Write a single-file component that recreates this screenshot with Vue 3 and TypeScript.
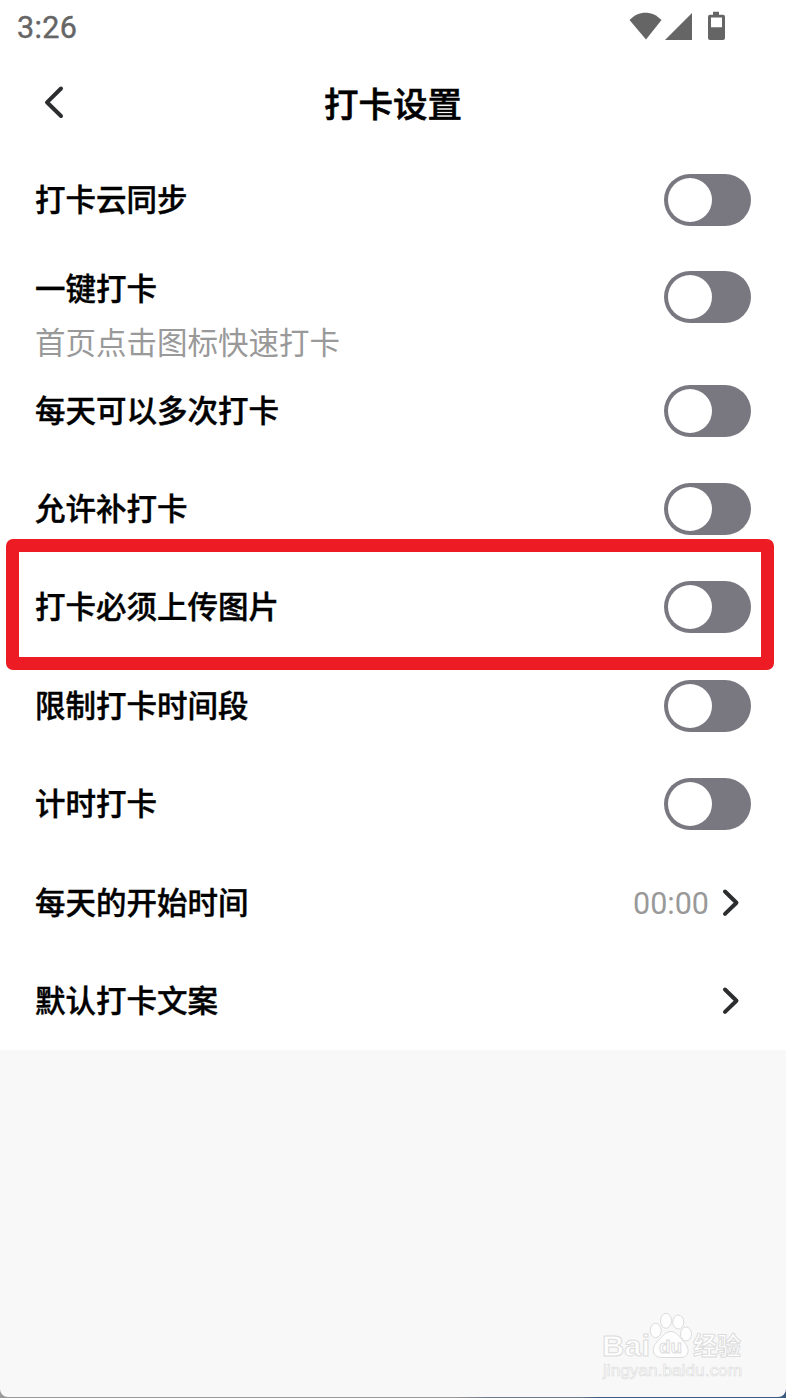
<script setup lang="ts">
interface Row {
  label: string
  kind: 'switch' | 'link'
  hint?: string
  value?: string
  marked?: boolean
}

const rows: Row[] = [
  { label: '打卡云同步', kind: 'switch' },
  { label: '一键打卡', kind: 'switch', hint: '首页点击图标快速打卡' },
  { label: '每天可以多次打卡', kind: 'switch' },
  { label: '允许补打卡', kind: 'switch' },
  { label: '打卡必须上传图片', kind: 'switch', marked: true },
  { label: '限制打卡时间段', kind: 'switch' },
  { label: '计时打卡', kind: 'switch' },
  { label: '每天的开始时间', kind: 'link', value: '00:00' },
  { label: '默认打卡文案', kind: 'link' },
]
</script>

<template>
  <div class="backdrop">
    <div class="screen">
      <div class="status">
        <span class="clock">3:26</span>
        <svg class="indicators" width="98" height="30" viewBox="0 0 98 30" fill="#656565">
          <path d="M.5 8C9.500-1.800 23.500-1.800 32.500 8L17 27.500Z" />
          <path d="M36 28H63V1Z" />
          <path d="M84 -.3h6v3h4q2 0 2 2V26q0 2-2 2H81q-2 0-2-2V4.700q0-2 2-2h3ZM82 5.500V15.200h11V5.500Z" fill-rule="evenodd" />
        </svg>
      </div>
      <header class="bar">
        <svg class="back" width="24" height="36" viewBox="0 0 24 36">
          <path d="M19 4.500 5 18.300 19 32" />
        </svg>
        <h1 class="title">打卡设置</h1>
      </header>
      <main class="list">
        <div v-for="row in rows" :key="row.label" class="row" :class="{ tall: row.hint }">
          <div class="texts">
            <span class="label">{{ row.label }}</span>
            <span v-if="row.hint" class="hint">{{ row.hint }}</span>
          </div>
          <span v-if="row.kind === 'switch'" class="switch"><span class="knob"></span></span>
          <span v-else class="link">
            <span v-if="row.value" class="value">{{ row.value }}</span>
            <svg width="24" height="32" viewBox="0 0 24 32"><path d="M6 4.500 17.500 15.700 6 26.900" /></svg>
          </span>
          <span v-if="row.marked" class="mark"></span>
        </div>
      </main>
      <svg class="watermark" width="146" height="74" viewBox="0 0 146 74">
        <g class="ink">
          <text x="2" y="46" class="brand" textLength="48" lengthAdjust="spacingAndGlyphs">Bai</text>
          <ellipse cx="55.700" cy="20.500" rx="5.500" ry="7.200" />
          <ellipse cx="66" cy="10.800" rx="5.500" ry="7.500" />
          <ellipse cx="78.300" cy="12" rx="5.500" ry="7" />
          <ellipse cx="86" cy="24" rx="5.500" ry="7" />
          <path d="M71 21.500C77 21.500 79 27 84 32C90 38 90 47.500 80 47.500H62C52 47.500 51 38 57 32C62 27 65 21.500 71 21.500Z" />
          <text x="59" y="43" class="du" textLength="23" lengthAdjust="spacingAndGlyphs">du</text>
          <text x="93" y="45" class="cjk" textLength="48" lengthAdjust="spacingAndGlyphs">经验</text>
          <text x="3" y="65.500" class="site" textLength="139" lengthAdjust="spacingAndGlyphs">jingyan.baidu.com</text>
        </g>
      </svg>
    </div>
  </div>
</template>

<style>
body {
  margin: 0;
}
</style>

<style scoped>
.backdrop {
  width: 786px;
  height: 1398px;
  overflow: hidden;
  background: linear-gradient(90deg, #999 0 58%, #6c7a8c 62% 74%, #3d5a83 76%);
}
.screen {
  position: relative;
  height: 1397px;
  overflow: hidden;
  background: #f8f8f8;
  border-radius: 0 0 8px 8px;
  font-family: Roboto, "Noto Sans CJK SC", sans-serif;
}
.status {
  display: flex;
  justify-content: space-between;
  box-sizing: border-box;
  height: 56px;
  padding: 12px 59px 0 17px;
  background: #fff;
}
.clock {
  font-size: 30.5px;
  line-height: 32px;
  font-weight: 400;
  color: #656565;
  letter-spacing: 0.4px;
  -webkit-text-stroke: 0.4px #656565;
}
.indicators {
  overflow: visible;
}
.bar {
  display: grid;
  grid-template-columns: 42px 1fr 42px;
  align-items: center;
  height: 95px;
  padding: 0 42px 3px;
  box-sizing: border-box;
  background: #fff;
}
.back path,
.link path {
  fill: none;
  stroke: #2c2d2f;
  stroke-width: 4;
  stroke-linecap: round;
  stroke-linejoin: round;
}
.title {
  margin: 0;
  text-align: center;
  font-family: "Noto Sans CJK SC", sans-serif;
  font-size: 34.5px;
  line-height: 50px;
  font-weight: 500;
  color: #000;
  -webkit-text-stroke: 0.6px #000;
}
.list {
  background: #fff;
}
.row {
  position: relative;
  display: flex;
  justify-content: space-between;
  align-items: center;
  height: 98.4px;
  padding: 0 35px;
}
.row.tall {
  height: 112px;
  align-items: flex-start;
}
.texts {
  display: flex;
  flex-direction: column;
  padding-bottom: 4px;
  font-family: "Noto Sans CJK SC", sans-serif;
  font-size: 30.5px;
  line-height: 44px;
}
.tall .texts {
  padding-top: 16px;
}
.tall .switch {
  margin-top: 22px;
}
.label {
  font-weight: 500;
  color: #000;
  -webkit-text-stroke: 0.4px #000;
}
.hint {
  margin-top: 10px;
  font-weight: 400;
  color: #999;
}
.switch {
  display: flex;
  align-items: center;
  box-sizing: border-box;
  width: 87px;
  height: 52px;
  padding-left: 4px;
  border-radius: 26px;
  background: #797880;
}
.knob {
  width: 44px;
  height: 44px;
  border-radius: 50%;
  background: #fff;
}
.link {
  display: flex;
  align-items: center;
  gap: 10px;
  padding-right: 8px;
}
.value {
  padding-top: 2px;
  font-size: 30.5px;
  font-weight: 400;
  color: #999;
}
.mark {
  position: absolute;
  left: 6px;
  top: -19px;
  width: 768px;
  height: 131px;
  box-sizing: border-box;
  border: 13px solid #ed1c24;
  border-radius: 7px;
}
.watermark {
  position: absolute;
  left: 600px;
  top: 1310px;
}
.ink {
  fill: #fefefe;
  stroke: #dcdcdc;
  stroke-width: 1;
}
.brand {
  font: 700 30px "Liberation Sans", sans-serif;
}
.du {
  font: 700 19px "Liberation Sans", sans-serif;
}
.cjk {
  font: 700 25px "Noto Sans CJK SC", sans-serif;
}
.site {
  font: 400 16px "Liberation Sans", sans-serif;
  stroke-width: 0.6;
}
</style>
